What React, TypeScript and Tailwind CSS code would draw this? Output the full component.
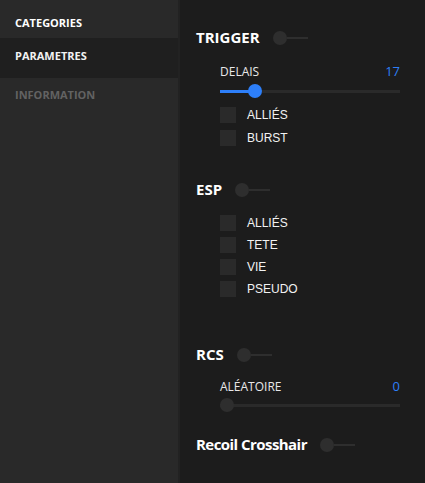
import React from "react";

const BLUE = "#2d7ff9";

function Toggle() {
  return (
    <div className="flex items-center mt-[2px]">
      <div className="w-[14px] h-[14px] rounded-full bg-[#2e2e2e]" />
      <div className="w-[21px] h-[2px] bg-[#2e2e2e]" />
    </div>
  );
}

function Heading({
  title,
  className = "",
  textClass = "",
}: {
  title: string;
  className?: string;
  textClass?: string;
}) {
  return (
    <div className={"flex items-center gap-[13px] h-[20px] " + className}>
      <span
        className={
          "text-[15px] leading-[20px] font-bold text-white font-['Open_Sans',sans-serif] " + textClass
        }
      >
        {title}
      </span>
      <Toggle />
    </div>
  );
}

function Slider({ value, active }: { value: number; active: boolean }) {
  const center = 7 + (value / 100) * 166;
  return (
    <div className="relative h-[14px] flex items-center">
      <div className="w-full h-[3px] bg-[#2a2a2a]" />
      {active && (
        <div
          className="absolute left-0 top-[5.5px] h-[3px]"
          style={{ width: center, background: BLUE }}
        />
      )}
      <div
        className={
          "absolute top-0 w-[14px] h-[14px] rounded-full " +
          (active ? "bg-[#2d7ff9]" : "bg-[#2e2e2e]")
        }
        style={{ left: center - 7 }}
      />
    </div>
  );
}

function LabelRow({ label, value }: { label: string; value: string }) {
  return (
    <div className="flex justify-between items-baseline h-[16px] font-['Open_Sans',sans-serif]">
      <span className="text-[12px] leading-[16px] text-[#e8e8e8]">{label}</span>
      <span className="text-[13px] leading-[16px] text-[#2d7ff9]">{value}</span>
    </div>
  );
}

function Check({ label }: { label: string }) {
  return (
    <div className="flex items-center gap-[11px] h-[16px]">
      <div className="w-[16px] h-[16px] bg-[#2a2a2a]" />
      <span className="text-[12px] leading-[16px] text-[#f2f2f2] font-['Liberation_Sans',Arial,sans-serif]">
        {label}
      </span>
    </div>
  );
}

export default function App() {
  return (
    <div className="w-[425px] h-[483px] flex bg-[#1c1c1c] overflow-hidden">
      <div className="w-[178px] h-full bg-[#292929] flex flex-col font-['Open_Sans',sans-serif] text-[11px] font-bold">
        <div className="h-[38px] pt-[16px] px-[15px] leading-[14px] text-white">CATEGORIES</div>
        <div className="h-[40px] pt-[11px] px-[15px] leading-[14px] text-[#f2f2f2] bg-[#1f1f1f]">
          PARAMETRES
        </div>
        <div className="pt-[10px] px-[15px] leading-[14px] text-[#626262]">INFORMATION</div>
      </div>
      <div className="w-[2px] h-full bg-[#222222]" />
      <div className="flex-1 flex flex-col pl-[16px] pr-[25px] pt-[27px]">
        <Heading title="TRIGGER" />
        <div className="pl-[24px] flex flex-col">
          <div className="mt-[16px]">
            <LabelRow label="DELAIS" value="17" />
          </div>
          <div className="mt-[5px]">
            <Slider value={17} active />
          </div>
          <div className="mt-[9px] flex flex-col gap-[7px]">
            <Check label="ALLIÉS" />
            <Check label="BURST" />
          </div>
        </div>

        <Heading title="ESP" className="mt-[33px]" />
        <div className="pl-[24px] mt-[16px] flex flex-col gap-[6px]">
          <Check label="ALLIÉS" />
          <Check label="TETE" />
          <Check label="VIE" />
          <Check label="PSEUDO" />
        </div>

        <Heading title="RCS" className="mt-[47px]" />
        <div className="pl-[24px] flex flex-col">
          <div className="mt-[14px]">
            <LabelRow label="ALÉATOIRE" value="0" />
          </div>
          <div className="mt-[4px]">
            <Slider value={0} active={false} />
          </div>
        </div>

        <Heading title="Recoil Crosshair" className="mt-[22px]" textClass="tracking-[-0.55px]" />
      </div>
    </div>
  );
}
